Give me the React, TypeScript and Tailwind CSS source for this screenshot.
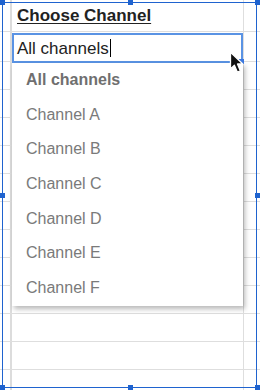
import React from 'react'

const channels = ['Channel A', 'Channel B', 'Channel C', 'Channel D', 'Channel E', 'Channel F']

function Row({ h, children }: { h: string; children?: React.ReactNode }) {
  return (
    <div className={`flex border-b border-[#dedede] ${h}`}>
      <div className="w-[12px] shrink-0 border-r-2 border-[#dcdcdc]" />
      <div className="relative w-[232px] shrink-0 border-r border-[#dedede]">{children}</div>
      <div className="flex-1" />
    </div>
  )
}

function Pointer() {
  return (
    <svg width="16" height="23" viewBox="0 0 16 23" className="absolute right-[-4px] top-[16px]">
      <path
        d="M1.5 1.2 L1.5 18 L5.4 14.2 L8.4 21.2 L11.4 19.9 L8.5 13 L13.8 13 Z"
        fill="#111"
        stroke="#fff"
        strokeWidth="1.3"
        strokeLinejoin="round"
      />
    </svg>
  )
}

function Handles() {
  const dot = 'w-[5px] h-[5px] bg-[#1f63cf]'
  return (
    <div className="absolute inset-0 pointer-events-none">
      <div className="absolute left-[2px] top-[2px] right-[3px] bottom-[2px] border-[1.5px] border-[#1f63cf]" />
      <div className="relative h-full flex flex-col justify-between">
        <div className="flex justify-between">
          <div className={dot} />
          <div className={dot} />
          <div className={dot} />
        </div>
        <div className="flex justify-between">
          <div className={dot} />
          <div className={dot} />
        </div>
        <div className="flex justify-between">
          <div className={dot} />
          <div className={dot} />
          <div className={dot} />
        </div>
      </div>
    </div>
  )
}

export default function App() {
  const rows = Array.from({ length: 12 })

  return (
    <div className="relative w-[260px] h-[390px] bg-white overflow-hidden font-['Liberation_Sans',Arial,sans-serif]">
      <Row h="h-[32px]">
        <div className="pl-[5px] pt-[6px] text-[17px] leading-[20px] font-bold text-[#222] underline underline-offset-[2px]">
          Choose Channel
        </div>
      </Row>
      <Row h="h-[30px]">
        {/* cell editor + dropdown */}
        <div className="relative z-10 h-[30px] mt-[1px] border-2 border-[#5a93e4] bg-white flex items-center pl-[3px]">
          <span className="text-[17px] leading-none text-[#222]">All channels</span>
          <span className="ml-[1px] w-px h-[18px] bg-black" />
          <div className="absolute right-[-3px] bottom-[-3px] w-[5px] h-[5px] bg-[#3b78e0]" />
          <div className="absolute left-[-2px] top-[28px] w-[231px] bg-white shadow-[2px_3px_5px_rgba(0,0,0,0.28)]">
            <div className="h-[34.67px] leading-[34.67px] pl-[14px] text-[16px] font-bold text-[#6f6f6f]">
              All channels
            </div>
            {channels.map((c) => (
              <div key={c} className="h-[34.67px] leading-[34.67px] pl-[14px] text-[16px] text-[#7a7a7a]">
                {c}
              </div>
            ))}
          </div>
          <Pointer />
        </div>
      </Row>
      {rows.map((_, i) => (
        <Row key={i} h="h-[28px]" />
      ))}

      <Handles />
    </div>
  )
}
